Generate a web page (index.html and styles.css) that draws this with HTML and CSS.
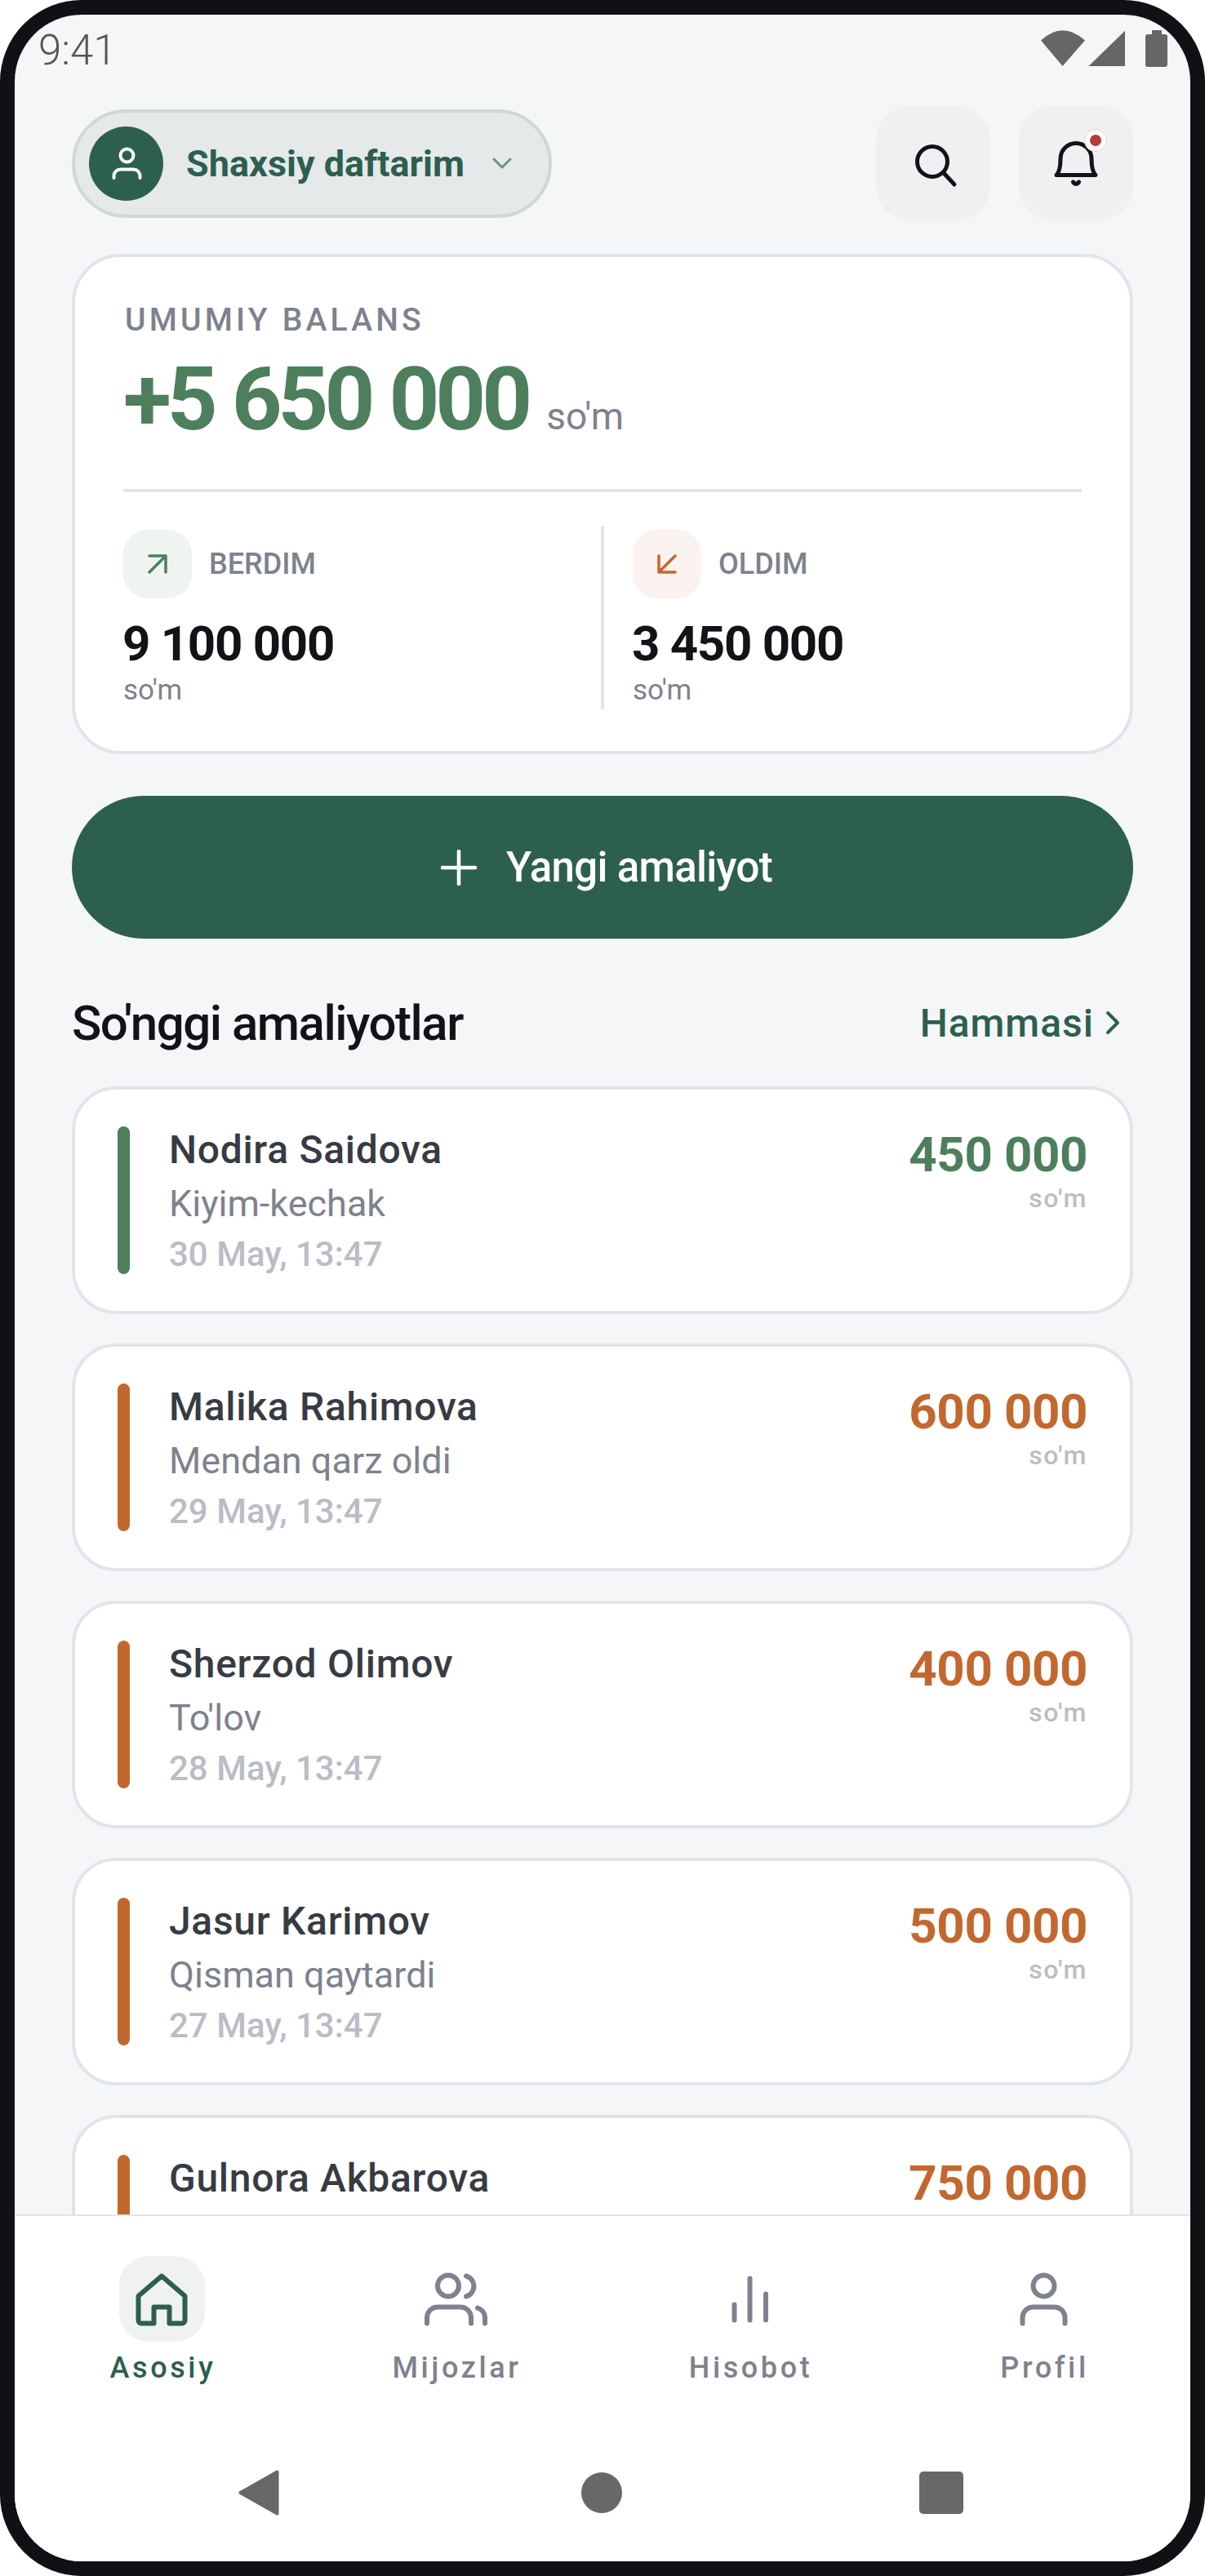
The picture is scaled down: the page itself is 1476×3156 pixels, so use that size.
FILE: index.html
```html
<!DOCTYPE html>
<html lang="uz">
<head>
<meta charset="utf-8">
<title>Shaxsiy daftarim</title>
<link rel="stylesheet" href="styles.css">
</head>
<body>
<div class="device">
  <div class="screen">
    <div class="status">
      <span class="clock">9:41</span>
      <svg class="status-icons" viewBox="0 0 155 45" width="155" height="45"><path d="M0 12.5Q26.5-12 54 12.5L26.5 44Z"/><path d="M103 .7V44H58.500Z"/><rect x="128" y="5" width="27" height="40" rx="3"/><rect x="136" width="12" height="6"/></svg>
    </div>
    <main class="content">
      <header class="topbar">
        <button class="pill">
          <span class="avatar"><svg viewBox="0 0 48 48" width="48" height="48" fill="none" stroke="#fff" stroke-width="4" stroke-linecap="round"><circle cx="24.500" cy="14.500" r="8"/><path d="M8.500 42V39.500a8 8 0 0 1 8-8H32.500a8 8 0 0 1 8 8V42"/></svg></span>
          <span class="pill-text">Shaxsiy daftarim</span>
          <svg class="pill-chevron" viewBox="0 0 24 14" width="24" height="14" fill="none" stroke="#6f9387" stroke-width="3" stroke-linecap="round" stroke-linejoin="round"><path d="M2 2l10 10L22 2"/></svg>
        </button>
        <div class="top-actions">
          <button class="icon-btn"><svg viewBox="0 0 60 60" width="60" height="60" fill="none" stroke="#111317" stroke-width="5" stroke-linecap="round"><circle cx="29" cy="28" r="18.500"/><path d="M43 42L56 56"/></svg></button>
          <button class="icon-btn"><svg viewBox="0 0 66 66" width="66" height="66" fill="none" stroke="#111317" stroke-width="5" stroke-linecap="round" stroke-linejoin="round"><path d="M9 47.500c4-4 5-10 5-20a19 19 0 0 1 38 0c0 10 1 16 5 20Z"/><path d="M29.500 56c2 3 5 3 7 0"/></svg><span class="dot"></span></button>
        </div>
      </header>

      <section class="balance">
        <div class="balance-label">UMUMIY BALANS</div>
        <div class="balance-value"><span class="balance-num">+5 650 000</span><span class="balance-cur">so'm</span></div>
        <div class="rule"></div>
        <div class="stats">
          <div class="stat">
            <div class="stat-head"><span class="stat-icon up"><svg viewBox="0 0 24 24" width="24" height="24" fill="none" stroke="#4d7f5c" stroke-width="3.500" stroke-linecap="round" stroke-linejoin="round"><path d="M2 2H22V22M22 2L2 22"/></svg></span><span class="stat-label">BERDIM</span></div>
            <div class="stat-num">9 100 000</div>
            <div class="stat-cur">so'm</div>
          </div>
          <div class="stat-sep"></div>
          <div class="stat stat-right">
            <div class="stat-head"><span class="stat-icon down"><svg viewBox="0 0 24 24" width="24" height="24" fill="none" stroke="#c2682f" stroke-width="3.500" stroke-linecap="round" stroke-linejoin="round"><path d="M2 2V22H22M2 22L22 2"/></svg></span><span class="stat-label">OLDIM</span></div>
            <div class="stat-num">3 450 000</div>
            <div class="stat-cur">so'm</div>
          </div>
        </div>
      </section>

      <button class="cta"><svg viewBox="0 0 44 44" width="44" height="44" fill="none" stroke="#fff" stroke-width="4.500" stroke-linecap="round"><path d="M22 2V42M2 22H42"/></svg><span>Yangi amaliyot</span></button>

      <div class="section-head">
        <h2 class="section-title">So'nggi amaliyotlar</h2>
        <a class="section-link">Hammasi<svg viewBox="0 0 18 30" width="18" height="30" fill="none" stroke="#2d5f4f" stroke-width="4" stroke-linecap="round" stroke-linejoin="round"><path d="M3 3l12 12L3 27"/></svg></a>
      </div>

      <div class="tx-list">
        <article class="tx"><span class="tx-bar give"></span><div class="tx-text"><div class="tx-name">Nodira Saidova</div><div class="tx-sub">Kiyim-kechak</div><div class="tx-date">30 May, 13:47</div></div><div class="tx-right"><div class="tx-amount give-text">450 000</div><div class="tx-cur">so'm</div></div></article>
        <article class="tx"><span class="tx-bar take"></span><div class="tx-text"><div class="tx-name">Malika Rahimova</div><div class="tx-sub">Mendan qarz oldi</div><div class="tx-date">29 May, 13:47</div></div><div class="tx-right"><div class="tx-amount take-text">600 000</div><div class="tx-cur">so'm</div></div></article>
        <article class="tx"><span class="tx-bar take"></span><div class="tx-text"><div class="tx-name">Sherzod Olimov</div><div class="tx-sub">To'lov</div><div class="tx-date">28 May, 13:47</div></div><div class="tx-right"><div class="tx-amount take-text">400 000</div><div class="tx-cur">so'm</div></div></article>
        <article class="tx"><span class="tx-bar take"></span><div class="tx-text"><div class="tx-name">Jasur Karimov</div><div class="tx-sub">Qisman qaytardi</div><div class="tx-date">27 May, 13:47</div></div><div class="tx-right"><div class="tx-amount take-text">500 000</div><div class="tx-cur">so'm</div></div></article>
        <article class="tx"><span class="tx-bar take"></span><div class="tx-text"><div class="tx-name">Gulnora Akbarova</div></div><div class="tx-right"><div class="tx-amount take-text">750 000</div></div></article>
      </div>
    </main>

    <nav class="tabbar">
      <a class="tab active"><span class="tab-tile"><svg class="tab-icon" viewBox="0 0 72 72" width="72" height="72" fill="none" stroke="#2d5f4f" stroke-width="6" stroke-linecap="round" stroke-linejoin="round"><path d="M36 7.500L64.500 32V62a3.500 3.500 0 0 1-3.500 3.500H45.500V45.500H26.500V65.500H11a3.500 3.500 0 0 1-3.500-3.500V32Z"/></svg></span><span class="tab-label">Asosiy</span></a>
      <a class="tab"><span class="tab-tile"><svg class="tab-icon" viewBox="0 0 72 72" width="72" height="72" fill="none" stroke="#7d828d" stroke-width="6" stroke-linecap="round" stroke-linejoin="round"><circle cx="27" cy="19.500" r="13"/><path d="M49 7.500A13 13 0 0 1 49 32.500"/><path d="M1 65.500V58a13 13 0 0 1 13-12.500H42a13 13 0 0 1 13 12.500V65.500"/><path d="M63 46.500Q72 50 72 58V65.500"/></svg></span><span class="tab-label">Mijozlar</span></a>
      <a class="tab"><span class="tab-tile"><svg class="tab-icon" viewBox="0 0 72 72" width="72" height="72" fill="none" stroke="#7d828d" stroke-width="6" stroke-linecap="round"><path d="M17.500 42.500V61.500M36.500 10.500V61.500M56 29.500V61.500"/></svg></span><span class="tab-label">Hisobot</span></a>
      <a class="tab"><span class="tab-tile"><svg class="tab-icon" viewBox="0 0 72 72" width="72" height="72" fill="none" stroke="#7d828d" stroke-width="6" stroke-linecap="round"><circle cx="36.500" cy="19.500" r="13"/><path d="M10.500 65.500V58a13 13 0 0 1 13-12.500H49.500a13 13 0 0 1 13 12.500V65.500"/></svg></span><span class="tab-label">Profil</span></a>
    </nav>

    <div class="navbar">
      <svg class="nav-back" viewBox="0 0 50 56" width="50" height="56" fill="#686868" stroke="#686868" stroke-width="4" stroke-linejoin="round"><path d="M47.500 2.500V53.500L2.500 28Z"/></svg>
      <span class="nav-home"></span>
      <span class="nav-recent"></span>
    </div>
  </div>
</div>
</body>
</html>
```

FILE: styles.css
```css
* { box-sizing: border-box; }
html, body { margin: 0; padding: 0; background: #fff; }
body { font-family: Roboto, "Noto Sans", sans-serif; width: 1476px; height: 3156px; overflow: hidden; }
button { font: inherit; padding: 0; border: 0; background: none; }

.device { width: 1476px; height: 3156px; border: 18px solid #101114; border-radius: 100px; background: #101114; }
.screen { width: 1440px; height: 3120px; border-radius: 82px; overflow: hidden; background: #f5f6f8; display: flex; flex-direction: column; }

.status { flex: none; height: 112px; padding: 14px 28px 0 29px; display: flex; justify-content: space-between; align-items: flex-start; }
.clock { font-size: 51px; line-height: 60px; font-weight: 300; color: #555; }
.status-icons { margin-top: 5px; fill: #666; }

.content { flex: 1; min-height: 0; overflow: hidden; padding: 0 70px; }

.topbar { display: flex; justify-content: space-between; align-items: center; height: 140px; }
.pill { display: flex; align-items: center; height: 133px; padding: 0 45px 0 17px; border: 4px solid #cdd9d5; border-radius: 70px; background: #e5e9e9; }
.avatar { width: 91px; height: 91px; border-radius: 50%; background: #2d5f4f; display: flex; align-items: center; justify-content: center; }
.pill-text { margin-left: 28px; font-size: 45px; font-weight: 700; color: #2d5f4f; white-space: nowrap; }
.pill-chevron { margin-left: 34px; }
.top-actions { display: flex; gap: 35px; }
.icon-btn { position: relative; width: 140px; height: 140px; border-radius: 42px; background: #eff0f2; display: flex; align-items: center; justify-content: center; }
.dot { position: absolute; left: 80px; top: 28px; width: 28px; height: 28px; border-radius: 50%; background: #b83a3a; border: 7px solid #fff; outline: 1px solid #eec9c9; outline-offset: -1px; }

.balance { margin-top: 41px; height: 613px; padding: 57px 59px 0; background: #fff; border: 4px solid #e1e5ea; border-radius: 60px; }
.balance-label { margin-left: 2px; font-size: 39px; line-height: 40px; font-weight: 500; letter-spacing: 4.200px; color: #7d828d; }
.balance-value { margin-top: 17px; height: 120px; line-height: 120px; white-space: nowrap; }
.balance-num { font-size: 108px; font-weight: 700; letter-spacing: -5px; color: #4d7f5c; }
.balance-cur { margin-left: 22px; font-size: 46px; line-height: 1; color: #7d828d; }
.rule { margin-top: 50px; height: 4px; background: #e1e5e9; }
.stats { margin-top: 42px; display: grid; grid-template-columns: 1fr 4px 1fr; height: 224px; }
.stat { padding-top: 4px; }
.stat-right { padding-left: 35px; }
.stat-sep { background: #e1e5ea; }
.stat-head { display: flex; align-items: center; gap: 21px; }
.stat-icon { width: 84px; height: 84px; border-radius: 30px; display: flex; align-items: center; justify-content: center; }
.stat-icon.up { background: #eff4f1; }
.stat-icon.down { background: #fbf3ef; }
.stat-label { font-size: 36px; font-weight: 500; color: #7d828d; }
.stat-num { margin: 21px 0 0 -1px; font-size: 60px; line-height: 70px; font-weight: 700; letter-spacing: -1.300px; color: #111317; white-space: nowrap; }
.stat-cur { margin-top: 2px; font-size: 35px; line-height: 40px; color: #7d828d; }

.cta { margin-top: 51px; width: 100%; height: 175px; padding-left: 10px; border-radius: 88px; background: #2d5f4f; color: #fff; display: flex; align-items: center; justify-content: center; gap: 36px; }
.cta span { font-size: 51px; font-weight: 500; letter-spacing: -.7px; }

.section-head { margin-top: 63px; height: 80px; display: flex; justify-content: space-between; align-items: center; }
.section-title { margin: 0; font-size: 60px; font-weight: 500; letter-spacing: -1.500px; color: #111317; }
.section-link { display: flex; align-items: center; gap: 14px; margin-right: 16px; font-size: 48px; font-weight: 500; letter-spacing: 1px; color: #2d5f4f; }

.tx-list { margin-top: 38px; display: flex; flex-direction: column; gap: 36px; }
.tx { flex: none; height: 279px; display: flex; padding: 45px 52px 45px 52px; background: #fff; border: 4px solid #e1e5ea; border-radius: 54px; }
.tx-bar { flex: none; width: 15px; border-radius: 8px; }
.give { background: #4d7f5c; }
.take { background: #c2682f; }
.tx-text { flex: 1; margin-left: 48px; }
.tx-name { font-size: 48px; line-height: 57px; font-weight: 500; letter-spacing: .7px; color: #373b43; }
.tx-sub { margin-top: 11px; font-size: 45px; line-height: 54px; color: #7d828d; }
.tx-date { margin-top: 11px; font-size: 42px; line-height: 48px; font-weight: 500; color: #babdc6; }
.tx-right { text-align: right; }
.tx-amount { font-size: 60px; line-height: 70px; font-weight: 700; letter-spacing: -.4px; }
.give-text { color: #4d7f5c; }
.take-text { color: #c2682f; }
.tx-cur { margin-top: -2px; font-size: 32px; line-height: 40px; font-weight: 500; letter-spacing: 1.500px; color: #babdc6; }

.tabbar { flex: none; height: 257px; padding-top: 49px; display: grid; grid-template-columns: repeat(4, 1fr); background: #fff; border-top: 2px solid #e1e5ea; }
.tab { display: flex; flex-direction: column; align-items: center; }
.tab-tile { width: 105px; height: 105px; border-radius: 36px; display: flex; align-items: center; justify-content: center; }
.tab.active .tab-tile { background: #f0f2f1; }
.tab-icon { overflow: visible; }
.tab-label { margin: 10px 0 0 3px; font-size: 36px; line-height: 44px; font-weight: 500; letter-spacing: 3.600px; color: #7d828d; }
.tab.active .tab-label { color: #2d5f4f; }

.navbar { flex: none; height: 168px; padding-right: 4px; background: #fff; display: flex; align-items: center; justify-content: center; }
.nav-home { margin-left: 370px; width: 50px; height: 50px; border-radius: 50%; background: #686868; }
.nav-recent { margin-left: 364px; width: 54px; height: 52px; border-radius: 5px; background: #686868; }
```
